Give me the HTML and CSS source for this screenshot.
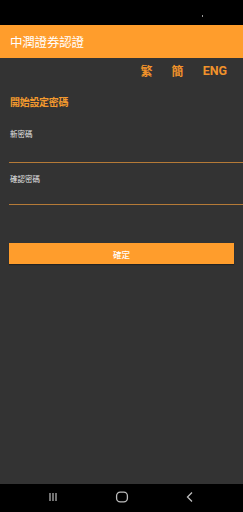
FILE: index.html
```html
<!DOCTYPE html>
<html lang="zh-Hant">
<head>
<meta charset="utf-8">
<link rel="stylesheet" href="styles.css">
</head>
<body>
<div class="screen">
  <div class="status"><span class="dot"></span></div>
  <header class="appbar"><h1 class="title">中潤證券認證</h1></header>
  <main class="main">
    <nav class="langs">
      <span class="lang">繁</span>
      <span class="lang">簡</span>
      <span class="lang eng">ENG</span>
    </nav>
    <h2 class="heading">開始設定密碼</h2>
    <div class="field first">
      <label class="label">新密碼</label>
      <input class="input" type="password">
    </div>
    <div class="field second">
      <label class="label">確認密碼</label>
      <input class="input" type="password">
    </div>
    <button class="btn">確定</button>
  </main>
  <footer class="navbar">
    <svg class="nav-icon" width="12" height="12" viewBox="0 0 12 12"><path d="M3 2v8M6 2v8M9 2v8" stroke="#bdbdbd" stroke-width="1.2" fill="none"/></svg>
    <svg class="nav-icon" width="14" height="12" viewBox="0 0 14 12"><rect x="1.6" y="1.1" width="10.8" height="9.8" rx="3.6" stroke="#bdbdbd" stroke-width="1.3" fill="none"/></svg>
    <svg class="nav-icon" width="12" height="12" viewBox="0 0 12 12"><path d="M8 1.5L3.5 6L8 10.5" stroke="#bdbdbd" stroke-width="1.3" fill="none"/></svg>
  </footer>
</div>
</body>
</html>
```
FILE: styles.css
```css
* { box-sizing: border-box; }
html, body { margin: 0; padding: 0; background: #000; }
body { font-family: "Noto Sans CJK TC", "Noto Sans", Roboto, sans-serif; }
.screen { width: 243px; height: 512px; display: flex; flex-direction: column; }
.status { height: 25px; background: #000; position: relative; }
.dot { position: absolute; left: 202px; top: 15px; width: 1px; height: 2px; background: #999; }
.appbar { height: 33px; background: #ff9d2c; display: flex; align-items: center; padding-left: 10px; }
.title { margin: 0; font-size: 12.5px; font-weight: 400; color: #fff; line-height: 16px; letter-spacing: -0.2px; }
.main { flex: 1; background: #333333; padding-left: 9px; display: flex; flex-direction: column; }
.langs { margin-top: 4px; height: 18px; display: flex; justify-content: flex-end; gap: 19px; padding-right: 16px; align-items: center; }
.lang { color: #f0922b; font-size: 12px; font-weight: 700; line-height: 18px; }
.eng { font-family: Roboto, "Noto Sans", sans-serif; font-size: 12.5px; }
.heading { margin: 15px 0 0 1px; font-size: 10px; line-height: 14px; font-weight: 700; color: #f39a2e; letter-spacing: -0.3px; }
.field { display: flex; flex-direction: column; }
.field.first { margin-top: 20px; }
.field.second { margin-top: 11px; }
.label { font-size: 7.5px; line-height: 10px; color: #e6e6e6; margin-left: 1px; }
.input { background: transparent; border: none; border-bottom: 1px solid #b57a37; outline: none; padding: 0; margin: 0; }
.first .input { height: 24px; }
.second .input { height: 21px; }
.btn { margin-top: 38px; width: 225px; height: 21px; background: #ff9d2c; border: none; color: #fff; font-family: "Noto Sans CJK TC", sans-serif; font-size: 8.5px; font-weight: 500; padding: 0; box-shadow: 0 1px 1px rgba(0,0,0,0.3); }
.navbar { height: 28px; background: #000; display: flex; align-items: center; justify-content: space-between; padding: 0 47px 2px 47px; }
.nav-icon { display: block; }
```
